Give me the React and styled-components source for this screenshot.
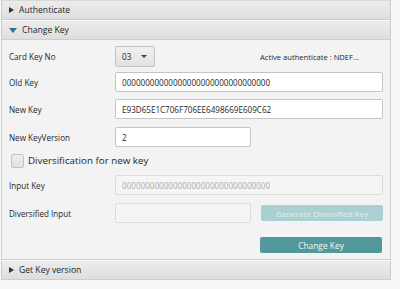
import React from 'react';
import styled, { createGlobalStyle } from 'styled-components';

const GlobalStyle = createGlobalStyle`
  html, body {
    margin: 0;
    padding: 0;
    background: #f7f7f7;
    font-family: "Open Sans", "Noto Sans", sans-serif;
    font-size: 8.1px;
    color: #262626;
  }
`;

const Accordion = styled.div`
  width: 390px;
  margin-left: 1px;
  display: flex;
  flex-direction: column;
`;

const Header = styled.div`
  height: 20px;
  box-sizing: border-box;
  display: flex;
  align-items: center;
  padding-left: 7px;
  gap: 5px;
  border: 1px solid #cdcdcd;
  border-top-color: ${(p) => (p.$first ? '#d8d8d8' : '#f6f6f6')};
  background: linear-gradient(#ececec, #dedede);
  font-size: 8.6px;
  color: #262626;
`;

const Arrow = styled.span`
  width: 0;
  height: 0;
  ${(p) =>
    p.$open
      ? `border-left: 4px solid transparent;
         border-right: 4px solid transparent;
         border-top: 5px solid #2e6f96;`
      : `border-top: 3.5px solid transparent;
         border-bottom: 3.5px solid transparent;
         border-left: 5px solid #333;`}
`;

const Content = styled.div`
  height: 220px;
  box-sizing: border-box;
  border: 1px solid #d0d0d0;
  border-top: none;
  background: #f3f3f3;
  padding: 5px 7px 0 7px;
  display: flex;
  flex-direction: column;
`;

const Row = styled.div`
  display: flex;
  align-items: center;
  height: ${(p) => p.$h || 20}px;
  margin-top: ${(p) => p.$mt || 0}px;
`;

const Label = styled.span`
  width: 106px;
  flex-shrink: 0;
`;

const Select = styled.div`
  width: 40px;
  height: 21px;
  box-sizing: border-box;
  border: 1px solid #c4c4c4;
  border-radius: 2px;
  background: linear-gradient(#f0f0f0, #e2e2e2);
  display: flex;
  align-items: center;
  justify-content: space-between;
  padding: 0 7px 0 6px;
  &::after {
    content: '';
    border-left: 3px solid transparent;
    border-right: 3px solid transparent;
    border-top: 3.5px solid #444;
  }
`;

const Status = styled.span`
  margin-left: auto;
  margin-right: 24px;
  font-size: 7.6px;
`;

const Input = styled.div`
  width: ${(p) => p.$w}px;
  height: 20px;
  box-sizing: border-box;
  border: 1px solid ${(p) => (p.$disabled ? '#dcdcdc' : '#c4c4c4')};
  border-radius: 2px;
  background: ${(p) => (p.$disabled ? '#f5f5f5' : '#fff')};
  color: ${(p) => (p.$disabled ? '#aaaaaa' : '#262626')};
  display: flex;
  align-items: center;
  padding-left: 6px;
`;

const Check = styled.span`
  width: 13px;
  height: 14px;
  box-sizing: border-box;
  border: 1px solid #c4c4c4;
  border-radius: 2px;
  background: linear-gradient(#ededed, #e0e0e0);
  margin: 0 4px 0 2px;
`;

const CheckLabel = styled.span`
  font-size: 9.8px;
`;

const ButtonRow = styled(Row)`
  justify-content: flex-end;
  padding-right: 1px;
`;

const Button = styled.div`
  width: 122px;
  height: 16px;
  box-sizing: border-box;
  border-radius: 2px;
  background: ${(p) => (p.$disabled ? '#aad0d1' : '#52999c')};
  color: ${(p) => (p.$disabled ? '#e2efef' : '#f2f8f8')};
  display: flex;
  align-items: center;
  justify-content: center;
  font-size: ${(p) => (p.$disabled ? 8 : 8.4)}px;
  margin-left: ${(p) => p.$ml || 0}px;
`;

export default function App() {
  const zeros = '0'.repeat(32);
  return (
    <>
      <GlobalStyle />
      <Accordion>
        <Header $first>
          <Arrow />
          Authenticate
        </Header>
        <Header>
          <Arrow $open />
          Change Key
        </Header>
        <Content>
          <Row $h={21} $mt={1}>
            <Label>Card Key No</Label>
            <Select>03</Select>
            <Status>Active authenticate : NDEF...</Status>
          </Row>
          <Row $mt={5}>
            <Label>Old Key</Label>
            <Input $w={268}>{zeros}</Input>
          </Row>
          <Row $mt={7}>
            <Label>New Key</Label>
            <Input $w={268}>E93D65E1C706F706EE6498669E609C62</Input>
          </Row>
          <Row $mt={8}>
            <Label>New KeyVersion</Label>
            <Input $w={136}>2</Input>
          </Row>
          <Row $h={17} $mt={5}>
            <Check />
            <CheckLabel>Diversification for new key</CheckLabel>
          </Row>
          <Row $mt={6}>
            <Label>Input Key</Label>
            <Input $w={268} $disabled>
              {zeros}
            </Input>
          </Row>
          <Row $mt={8}>
            <Label>Diversified Input</Label>
            <Input $w={136} $disabled />
            <Button $disabled $ml={10}>
              Generate Diversified Key
            </Button>
          </Row>
          <ButtonRow $h={16} $mt={14}>
            <Button>Change Key</Button>
          </ButtonRow>
        </Content>
        <Header>
          <Arrow />
          Get Key version
        </Header>
      </Accordion>
    </>
  );
}
